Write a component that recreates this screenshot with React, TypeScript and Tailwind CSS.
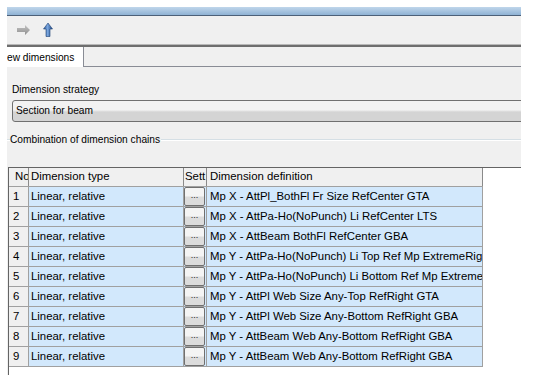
import React from 'react'

const rows = [
  'Mp X - AttPl_BothFl Fr Size RefCenter GTA',
  'Mp X - AttPa-Ho(NoPunch) Li RefCenter LTS',
  'Mp X - AttBeam BothFl RefCenter GBA',
  'Mp Y - AttPa-Ho(NoPunch) Li Top Ref Mp ExtremeRight GTA',
  'Mp Y - AttPa-Ho(NoPunch) Li Bottom Ref Mp ExtremeRight GBA',
  'Mp Y - AttPl Web Size Any-Top RefRight GTA',
  'Mp Y - AttPl Web Size Any-Bottom RefRight GBA',
  'Mp Y - AttBeam Web Any-Bottom RefRight GBA',
  'Mp Y - AttBeam Web Any-Bottom RefRight GBA',
]

const ui = { fontFamily: '"Liberation Sans", Arial, sans-serif' }

function RightArrow() {
  return (
    <svg width="14" height="10" viewBox="0 0 14 10">
      <defs>
        <linearGradient id="ga" x1="0" y1="0" x2="0" y2="1">
          <stop offset="0" stopColor="#c4c4c4" />
          <stop offset="1" stopColor="#8e8e8e" />
        </linearGradient>
      </defs>
      <path d="M0 3 H8 V0 L13 5 L8 10 V7 H0 Z" fill="url(#ga)" />
    </svg>
  )
}

function UpArrow() {
  return (
    <svg width="10" height="14" viewBox="0 0 10 14">
      <defs>
        <linearGradient id="ba" x1="0" y1="0" x2="1" y2="0">
          <stop offset="0" stopColor="#2a5797" />
          <stop offset="0.45" stopColor="#7aa6de" />
          <stop offset="1" stopColor="#1d4784" />
        </linearGradient>
      </defs>
      <path d="M5 0 L9.5 6 H7 V13.5 H3 V6 H0.5 Z" fill="url(#ba)" stroke="#1c3f73" strokeWidth="0.6" />
    </svg>
  )
}

export default function App() {
  return (
    <div className="w-[534px] h-[375px] overflow-hidden bg-white pt-[7px] pl-[7px] pr-[13px]" style={ui}>
      <div className="h-[368px] overflow-hidden bg-[#f0f0f0] flex flex-col">
        {/* title strip */}
        <div className="h-[9px] shrink-0 bg-gradient-to-b from-[#c0d6eb] to-[#8fb2d4] border-b border-[#4c6078]" />
        {/* toolbar */}
        <div className="h-[28px] shrink-0 flex items-center gap-[12px] pl-[10px]">
          <RightArrow />
          <UpArrow />
        </div>
        <div className="h-[3px] shrink-0 bg-[#6e6e6e] border-t border-[#b8b8b8]" />
        {/* tab strip */}
        <div className="h-[20px] shrink-0 flex">
          <div className="w-[77px] bg-white border-r border-[#898c95] flex items-center text-[10.2px] text-black leading-none whitespace-nowrap overflow-hidden pt-[2px]">
            ew dimensions
          </div>
          <div className="flex-1 border-b border-[#898c95]" />
        </div>
        {/* panel */}
        <div className="flex flex-col pl-[5px] pt-[17px] text-[10.2px] text-black">
          <div className="leading-[12px] h-[12px]">Dimension strategy</div>
          <div className="mt-[4px] h-[22px] w-[540px] rounded-[3px] border border-[#707070] bg-gradient-to-b from-[#f2f2f2] from-45% to-[#d4d4d4] to-55% flex items-center pl-[3px] leading-none">
            Section for beam
          </div>
        </div>
        {/* group box header */}
        <div className="mt-[12px] h-[12px] flex items-center text-[10.2px] text-black leading-none">
          <div className="w-[3px] h-[2px] border-t border-[#d5dfe5] border-b border-b-white" />
          <span>Combination of dimension chains</span>
          <div className="flex-1 ml-[1px] h-[2px] border-t border-[#d5dfe5] border-b border-b-white" />
        </div>
        {/* grid */}
        <div className="mt-[21px] ml-[1px] flex-1 bg-white border-t border-l border-[#646464] text-[11.4px] text-black">
          <div className="flex h-[19px] bg-[#f0f0f0] border-b border-[#a0a0a0] w-[474px]">
            <div className="w-[20px] pl-[6px] border-r border-[#8a8a8a] overflow-hidden whitespace-nowrap flex items-center">No</div>
            <div className="w-[155px] pl-[2px] border-r border-[#8a8a8a] overflow-hidden whitespace-nowrap flex items-center">Dimension type</div>
            <div className="w-[23px] pl-[1px] border-r border-[#8a8a8a] overflow-hidden whitespace-nowrap flex items-center">Sett</div>
            <div className="w-[276px] pl-[3px] border-r border-[#8a8a8a] overflow-hidden whitespace-nowrap flex items-center">Dimension definition</div>
          </div>
          {rows.map((def, i) => (
            <div key={i} className="flex h-[20px] border-b border-[#a0a0a0] w-[474px]">
              <div className="w-[20px] pl-[4px] bg-[#f0f0f0] border-r border-[#a0a0a0] flex items-center">{i + 1}</div>
              <div className="w-[155px] pl-[2px] bg-[#d2e8fc] border-r border-[#a0a0a0] flex items-center whitespace-nowrap overflow-hidden">Linear, relative</div>
              <div className="w-[23px] bg-[#d2e8fc] border-r border-[#a0a0a0] flex items-start">
                <div className="w-[21px] h-[19px] rounded-[2px] border border-[#707070] bg-gradient-to-b from-[#f4f4f4] from-45% to-[#dcdcdc] to-55% flex items-center justify-center text-[9px] leading-none pb-[3px] text-[#222]">
                  ...
                </div>
              </div>
              <div className="w-[276px] pl-[3px] bg-[#d2e8fc] border-r border-[#a0a0a0] flex items-center whitespace-nowrap overflow-hidden">{def}</div>
            </div>
          ))}
        </div>
      </div>
    </div>
  )
}
